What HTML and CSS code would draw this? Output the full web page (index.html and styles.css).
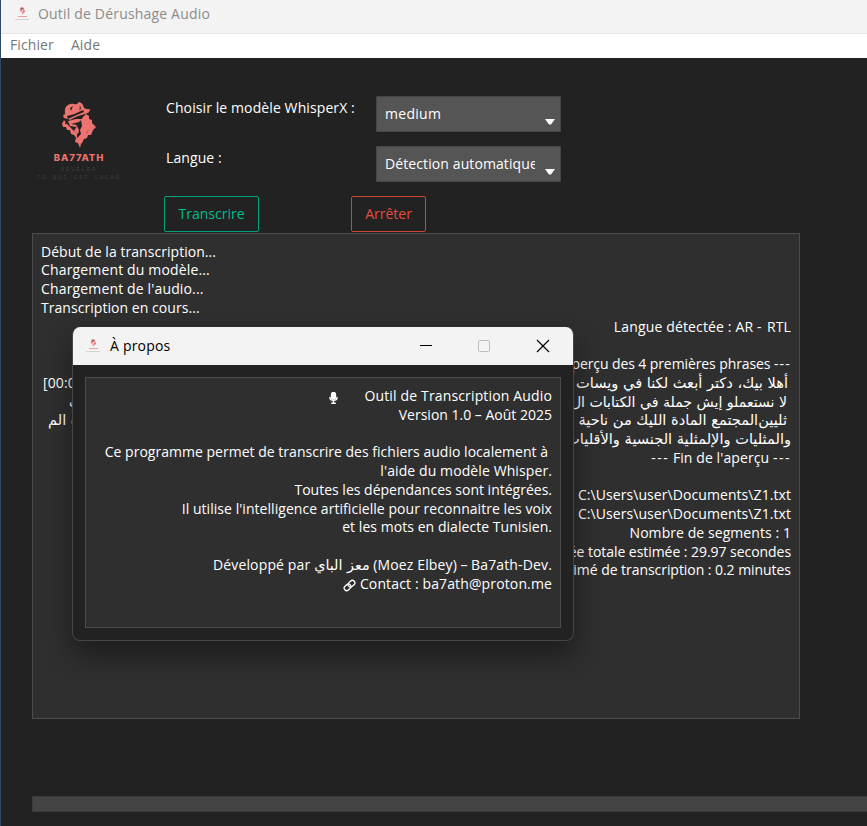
FILE: index.html
```html
<!DOCTYPE html>
<html lang="fr">
<head>
<meta charset="utf-8">
<title>Outil de Dérushage Audio</title>
<link rel="stylesheet" href="styles.css">
</head>
<body>
<svg class="defs" width="0" height="0" aria-hidden="true">
  <symbol id="hat-man" viewBox="0 0 34 48">
    <path d="M2 16 Q0 13 3 12 Q2 5 6 3 Q9 1 12 2 Q15 3 17 0 Q21 1 22 6 Q26 8 28 7 Q28 11 23 12 Q14 14 8 18 L6 17 Z"/>
    <path d="M24 12 L27 14 L27 17 L30 18 L30 21 L34 25 L31 28 L29 33 L26 33 L25 36 L22 37 L20 41 L19 37 L16 35 L19 32 L18 28 L20 24 L19 18 L21 15 Z"/>
    <path d="M2 18 L0 22 L1 25 L4 25 L5 28 L8 28 L9 32 L12 33 L15 37 L15 31 L12 29 L9 26 L5 22 Z"/>
    <path d="M6 19 L14 17 L20 17 L17 20 L9 22 L15 23 L14 25 L8 24 Z M14 36 L18 35 L21 39 L19 42 L18 46 L16 41 L13 40 Z M15 24 L17 28 L16 32 L12 29 Z"/>
    <path class="cut" d="M5 14 Q14 12 21 8 L22 10 Q14 13 6 17 Z M8 6 L11 4 L9 9 Z M18 3 L19 7 L17.500 8 Z M27 27 L25 31 L24 32 Z M3 20 L5 22 L3 22 Z"/>
  </symbol>
</svg>
<div class="window">
  <header class="titlebar">
    <span class="mini-logo"><svg><use href="#hat-man"/></svg><i></i><b></b></span>
    <span class="window-title">Outil de Dérushage Audio</span>
  </header>
  <nav class="menubar"><span>Fichier</span><span>Aide</span></nav>
  <main class="content">
    <section class="controls">
      <div class="logo">
        <svg class="logo-face"><use href="#hat-man"/></svg>
        <span class="logo-name">BA77ATH</span>
        <span class="logo-sub s1">RÉVÉLER</span>
        <span class="logo-sub s2">CE QUI EST CACHÉ</span>
      </div>
      <div class="form">
        <label>Choisir le modèle WhisperX :</label>
        <div class="combo"><span class="wide">medium</span><svg width="10" height="6"><path d="M0 0H10L6 5.5H4Z"/></svg></div>
        <label>Langue :</label>
        <div class="combo"><span>Détection automatique</span><svg width="10" height="6"><path d="M0 0H10L6 5.5H4Z"/></svg></div>
        <div class="buttons"><button class="go">Transcrire</button><button class="stop">Arrêter</button></div>
      </div>
    </section>
    <section class="log">
      <p class="left t1">Début de la transcription...</p>
      <p class="left t2">Chargement du modèle...</p>
      <p class="left t2">Chargement de l'audio...</p>
      <p class="left t1">Transcription en cours...</p>
      <p class="t2">Langue détectée : AR <span class="dash">-</span> RTL</p>
      <p></p>
      <p class="tight"><span class="dash">---</span> Aperçu des 4 premières phrases <span class="dash">---</span></p>
      <p class="split a1"><span>[00:00</span><bdi class="ar" dir="rtl">أهلا بيك، دكتر أبعث لكنا في ويسات</bdi></p>
      <p class="split a2"><bdi class="ar" dir="rtl">ب</bdi><bdi class="ar" dir="rtl">لا نستعملو إيش جملة في الكتابات ال</bdi></p>
      <p class="split a3"><bdi class="ar" dir="rtl">ة الم</bdi><bdi class="ar" dir="rtl">ثليين‌المجتمع المادة الليك من ناحية</bdi></p>
      <p class="a4"><bdi class="ar" dir="rtl">والمثليات والإلمثلية الجنسية والأقليات</bdi></p>
      <p><span class="dash">---</span> Fin de l'aperçu <span class="dash">---</span></p>
      <p></p>
      <p class="path">C:\Users\user\Documents\Z1.txt</p>
      <p class="path">C:\Users\user\Documents\Z1.txt</p>
      <p class="path">Nombre de segments : 1</p>
      <p class="total">Durée totale estimée : 29.97 secondes</p>
      <p class="total">Temps estimé de transcription : 0.2 minutes</p>
    </section>
    <div class="progress"></div>
  </main>
</div>
<div class="dialog">
  <header class="dialog-bar">
    <span class="mini-logo"><svg><use href="#hat-man"/></svg><i></i><b></b></span>
    <span class="dialog-title">À propos</span>
    <svg class="win-buttons" width="132" height="14" viewBox="0 0 132 14">
      <path d="M1 6.5H13" stroke="#000" stroke-width="1"/>
      <rect x="59.5" y="1.5" width="11" height="11" rx="1" fill="none" stroke="#bdbdbd"/>
      <path d="M118 1L130 13M130 1L118 13" stroke="#000" stroke-width="1.2"/>
    </svg>
  </header>
  <div class="about">
    <p class="d1"><svg class="mic" width="9" height="12" viewBox="0 0 9 12"><rect x="2.5" y=".5" width="4" height="6.5" rx="2"/><path d="M1 5V6Q1 8.2 4.5 8.2T8 6V5M4.5 8V11M2.2 11.2H6.8"/></svg><span>Outil de Transcription Audio</span></p>
    <p class="d2">Version 1.0 – Août 2025</p>
    <p></p>
    <p class="d3">Ce programme permet de transcrire des fichiers audio localement à</p>
    <p class="d4">l'aide du modèle Whisper.</p>
    <p class="d5">Toutes les dépendances sont intégrées.</p>
    <p class="d6">Il utilise l'intelligence artificielle pour reconnaitre les voix</p>
    <p class="d7">et les mots en dialecte Tunisien.</p>
    <p></p>
    <p class="d8">Développé par <bdi class="ar" dir="rtl">معز الباي</bdi> (Moez Elbey) – Ba7ath-Dev.</p>
    <p class="d9"><svg class="link" width="13" height="13" viewBox="0 0 13 13"><g transform="rotate(-42 6.5 6.5)"><rect x=".2" y="4" width="7.3" height="5" rx="2.5"/><rect x="5.5" y="4" width="7.3" height="5" rx="2.5"/></g></svg> Contact : ba7ath@proton.me</p>
  </div>
</div>
</body>
</html>
```
FILE: styles.css
```css
* { box-sizing: border-box; }
body {
  margin: 0;
  width: 867px;
  height: 826px;
  overflow: hidden;
  background: #222;
  color: #fff;
  font: 14px/18.75px "Open Sans", "Noto Sans", sans-serif;
  letter-spacing: 0.1px;
}
p { margin: 0; height: 18.75px; white-space: nowrap; }
.defs { position: absolute; }
.window { height: 826px; border-left: 1px solid #2e4a63; display: flex; flex-direction: column; }
.titlebar {
  height: 34px;
  padding: 0 0 5px 13px;
  display: flex;
  align-items: center;
  background: #f3f3f3;
  border-bottom: 1px solid #e5e5e5;
  color: #8b8b8b;
}
.mini-logo { width: 16px; height: 16px; padding-top: 1px; display: flex; flex-direction: column; align-items: center; fill: #ed8080; }
.mini-logo svg { width: 7px; height: 8px; }
.mini-logo i { width: 9px; height: 1px; margin-top: 1px; background: #ee9b9b; }
.mini-logo b { width: 14px; height: 1px; margin-top: 2px; background: #d3d3d3; }
.mini-logo .cut { fill: #f3f3f3; }
.window-title { margin-left: 8px; padding-top: 1px; letter-spacing: .18px; }
.menubar { height: 24px; padding: 2px 9px 0; background: #fff; color: #777; display: flex; gap: 17px; }
.content { flex: 1; padding: 38px 0 0 31px; background: #222; }
.controls { display: flex; height: 137px; }
.logo { width: 94px; padding-top: 6px; display: flex; flex-direction: column; align-items: center; fill: #ed7370; }
.logo-face { width: 34px; height: 48px; }
.cut { fill: #222; }
.logo-name { margin-top: 2px; color: #ed7370; font: 800 9.5px/12px Inter, sans-serif; letter-spacing: .95px; }
.logo-sub { color: #3c3c3c; font: 6px/8px "Liberation Mono", monospace; letter-spacing: 1.65px; white-space: nowrap; }
.s1 { margin-top: 2px; }
.form {
  margin-left: 38px;
  display: grid;
  grid-template-columns: 212px 185px;
  grid-template-rows: 36px 36px 36px;
  row-gap: 14px;
}
.form label { padding: 3px 0 0 2px; }
.combo {
  display: flex;
  align-items: center;
  background: #555;
  border: 1px solid #444;
  padding-left: 8px;
}
.combo span { width: 150px; overflow: hidden; white-space: nowrap; }
.combo .wide { letter-spacing: .3px; }
.combo svg { margin: 16px 0 0 10px; fill: #fff; }
.buttons { grid-column: 1 / 3; display: flex; gap: 92px; }
.buttons button { height: 36px; padding: 0; font: inherit; letter-spacing: 0; background: none; border: 1px solid; border-radius: 2px; }
.buttons .go { width: 95px; color: #00bc8c; border-color: #00a57b; }
.buttons .stop { width: 75px; color: #e74c3c; border-color: #cf4638; }
.log {
  width: 768px;
  height: 486px;
  padding: 8.5px 8px 0;
  background: #2f2f2f;
  border: 1px solid #4c4c4c;
  text-align: right;
}
.log .left { text-align: left; }
.t1 { letter-spacing: .05px; }
.t2 { letter-spacing: .15px; }
.path { letter-spacing: .07px; }
.total { letter-spacing: -.05px; }
.dash { letter-spacing: 1.5px; }
.tight { letter-spacing: -.1px; }
.tight .dash { letter-spacing: 1.2px; }
.split { display: flex; justify-content: space-between; }
.ar { font-family: "DejaVu Sans", sans-serif; font-size: 14.6px; letter-spacing: 0; }
.a1 { padding: 0 3px 0 2px; }
.a2 { padding: 0 4px 0 28px; }
.a3 { padding: 0 4px 0 7px; }
.a2 .ar { font-size: 14.1px; }
.progress { height: 16px; margin-top: 77px; background: #444; border: 1px solid #3b3b3b; border-right: 0; }
.dialog {
  position: absolute;
  left: 72px;
  top: 327px;
  width: 502px;
  height: 314px;
  border-radius: 8px;
  overflow: hidden;
  background: #222;
  border: 1px solid #464646;
  border-top: 0;
  box-shadow: 0 14px 28px rgba(0, 0, 0, .4);
}
.dialog-bar { height: 38px; padding: 0 22px 0 12px; display: flex; align-items: center; background: #f3f3f3; color: #000; }
.dialog-title { margin-left: 9px; letter-spacing: .2px; }
.win-buttons { margin-left: auto; }
.about {
  width: 476px;
  height: 251px;
  margin: 12px 0 0 12px;
  padding: 9px 8px 0;
  background: #2f2f2f;
  border: 1px solid #4c4c4c;
  text-align: right;
}
.mic { fill: #fff; stroke: #fff; stroke-width: 1.4; margin-right: 26px; vertical-align: -3px; }
.mic path { fill: none; }
.link { fill: none; stroke: #fff; stroke-width: 1.3; vertical-align: -3px; }
.d1 { letter-spacing: .15px; }
.d2 { letter-spacing: 0; }
.d3 { padding-right: 4px; letter-spacing: .02px; }
.d5 { letter-spacing: 0; }
.d6, .d7 { letter-spacing: .05px; }
.d8 { letter-spacing: .14px; }
.d8 .ar { font-size: 14.4px; }
.d9 { letter-spacing: .13px; }
```
